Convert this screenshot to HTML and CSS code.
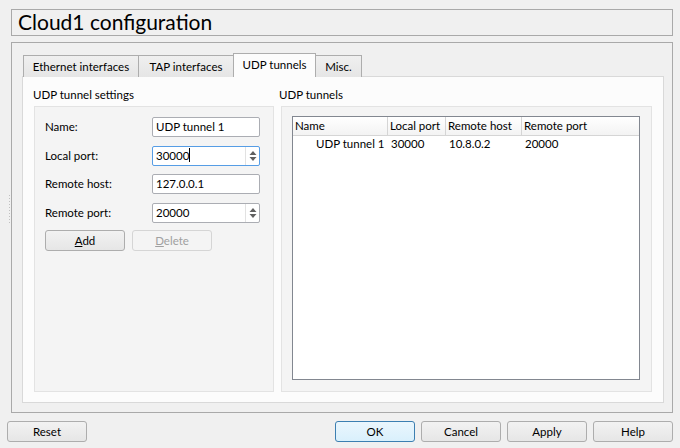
FILE: index.html
```html
<!DOCTYPE html>
<html>
<head>
<meta charset="utf-8">
<link rel="stylesheet" href="styles.css">
</head>
<body>
<div class="dialog">
  <div class="title">Cloud1 configuration</div>
  <div class="frame">
    <div class="tabbar">
      <div class="tab t1">Ethernet interfaces</div>
      <div class="tab t2">TAP interfaces</div>
      <div class="tab active">UDP tunnels</div>
      <div class="tab t4">Misc.</div>
    </div>
    <div class="pane">
      <div class="col left">
        <div class="section-label">UDP tunnel settings</div>
        <div class="group form">
          <label class="lbl">Name:</label>
          <div class="input"><span>UDP tunnel 1</span></div>
          <label class="lbl">Local port:</label>
          <div class="input spin focus"><span>30000<i class="caret"></i></span>
            <div class="arrows"><svg width="8" height="12" viewBox="0 0 8 12"><path d="M4 1 L7.5 5 L0.5 5 Z M4 11 L7.5 7 L0.5 7 Z" fill="#606060"/></svg></div>
          </div>
          <label class="lbl">Remote host:</label>
          <div class="input"><span>127.0.0.1</span></div>
          <label class="lbl">Remote port:</label>
          <div class="input spin"><span>20000</span>
            <div class="arrows"><svg width="8" height="12" viewBox="0 0 8 12"><path d="M4 1 L7.5 5 L0.5 5 Z M4 11 L7.5 7 L0.5 7 Z" fill="#606060"/></svg></div>
          </div>
          <div class="btnrow">
            <div class="btn"><u>A</u>dd</div>
            <div class="btn disabled"><u>D</u>elete</div>
          </div>
        </div>
      </div>
      <div class="col right">
        <div class="section-label">UDP tunnels</div>
        <div class="group list">
          <div class="table">
            <div class="thead">
              <div class="th c1">Name</div>
              <div class="th c2">Local port</div>
              <div class="th c3">Remote host</div>
              <div class="th c4">Remote port</div>
            </div>
            <div class="tr">
              <div class="td c1 indent">UDP tunnel 1</div>
              <div class="td c2">30000</div>
              <div class="td c3">10.8.0.2</div>
              <div class="td c4">20000</div>
            </div>
          </div>
        </div>
      </div>
    </div>
  </div>
  <div class="footer">
    <div class="btn wide">Reset</div>
    <div class="spacer"></div>
    <div class="btn wide default">OK</div>
    <div class="btn wide">Cancel</div>
    <div class="btn wide">Apply</div>
    <div class="btn wide">Help</div>
  </div>
  <div class="splitter"></div>
</div>
</body>
</html>
```

FILE: styles.css
```css
* { box-sizing: border-box; }
html, body { margin: 0; padding: 0; }
body {
  width: 680px;
  height: 448px;
  background: #f0f0f0;
  font-family: "Lato", "Noto Sans", sans-serif;
  font-size: 11.5px;
  color: #000;
  overflow: hidden;
}
.dialog {
  position: relative;
  padding-top: 9px;
  height: 448px;
}
.title {
  margin-left: 11px;
  width: 662px;
  height: 27px;
  border: 1px solid #a9a9a9;
  background: #f0f0f0;
  font-size: 21px;
  line-height: 24px;
  padding-left: 6px;
}
.frame {
  margin-top: 6px;
  margin-left: 11px;
  width: 662px;
  height: 371px;
  border: 1px solid #a9a9a9;
  padding: 10px 8px 9px 10px;
  display: flex;
  flex-direction: column;
}
.tabbar {
  display: flex;
  align-items: flex-end;
  height: 24px;
  margin-left: 1px;
  margin-bottom: -1px;
  position: relative;
  z-index: 1;
}
.tab {
  height: 22px;
  padding: 0;
  border: 1px solid #adadad;
  border-bottom: none;
  margin-right: -1px;
  background: linear-gradient(#f0f0f0, #e5e5e5);
  line-height: 21px;
  white-space: nowrap;
  text-align: center;
  color: #000;
}
.t1 { width: 116px; }
.t2 { width: 96px; }
.tab.active {
  width: 83px;
  height: 24px;
  background: #fcfcfc;
  line-height: 22px;
}
.t4 { width: 47px; }
.pane {
  flex: 1;
  background: #fcfcfc;
  border: 1px solid #d9d9d9;
  padding: 10px 11px 10px 11px;
  display: flex;
  gap: 7px;
}
.col { display: flex; flex-direction: column; }
.col.left { width: 240px; }
.col.right { flex: 1; }
.section-label {
  height: 16px;
  line-height: 16px;
  margin-bottom: 3px;
  margin-left: -1px;
}
.col.right .section-label { margin-left: -2px; }
.group {
  flex: 1;
  background: #f4f4f4;
  border: 1px solid #e3e3e3;
}
.form {
  display: grid;
  grid-template-columns: 107px 108px;
  grid-auto-rows: 20px;
  row-gap: 8.7px;
  padding: 10px 12px 0 10px;
  align-content: start;
}
.lbl { line-height: 20px; }
.input {
  position: relative;
  background: #fff;
  border: 1px solid #abadb3;
  border-radius: 2px;
  line-height: 18px;
  padding-left: 3px;
}
.input.focus { border-color: #569de5; }
.caret {
  display: inline-block;
  width: 1px;
  height: 14px;
  background: #000;
  vertical-align: -2px;
}
.arrows {
  position: absolute;
  right: 0;
  top: 0;
  bottom: 0;
  width: 14px;
  border-left: 1px solid #e2e2e2;
  display: flex;
  align-items: center;
  justify-content: center;
}
.btnrow {
  grid-column: 1 / 3;
  display: flex;
  gap: 7px;
  height: 21px;
  margin-top: -2px;
}
.btn {
  width: 80px;
  height: 21px;
  border: 1px solid #adadad;
  border-radius: 3px;
  background: linear-gradient(#f2f2f2, #e6e6e6);
  text-align: center;
  line-height: 19px;
}
.btn u { text-decoration: underline; }
.btn.disabled {
  color: #a0a0a0;
  border-color: #d5d5d5;
  background: #f4f4f4;
}
.list {
  padding: 9px 11px 11px 10px;
  display: flex;
}
.table {
  flex: 1;
  background: #fff;
  border: 1px solid #828790;
}
.thead {
  display: flex;
  height: 19px;
  border-bottom: 1px solid #d5d5d5;
  background: linear-gradient(#ffffff, #f3f3f3);
}
.th {
  line-height: 18px;
  padding-left: 2px;
  border-right: 1px solid #d5d5d5;
  white-space: nowrap;
}
.tr { display: flex; height: 16px; }
.td { line-height: 16px; padding-left: 3px; white-space: nowrap; }
.c1 { width: 95px; }
.c2 { width: 58px; }
.c3 { width: 76px; }
.c4 { flex: 1; border-right: none; }
.td.indent { padding-left: 23px; }
.footer {
  display: flex;
  gap: 6px;
  margin-top: 8px;
  padding: 0 7px 0 7px;
}
.spacer { flex: 1; }
.btn.wide { width: 80px; }
.btn.default { border-color: #3c7fb1; background: linear-gradient(#eaf6fd, #d9f0fc); }
.splitter {
  position: absolute;
  left: 9px;
  top: 195px;
  width: 1px;
  height: 30px;
  background: repeating-linear-gradient(#c0c0c0 0 1px, transparent 1px 3px);
}
```
